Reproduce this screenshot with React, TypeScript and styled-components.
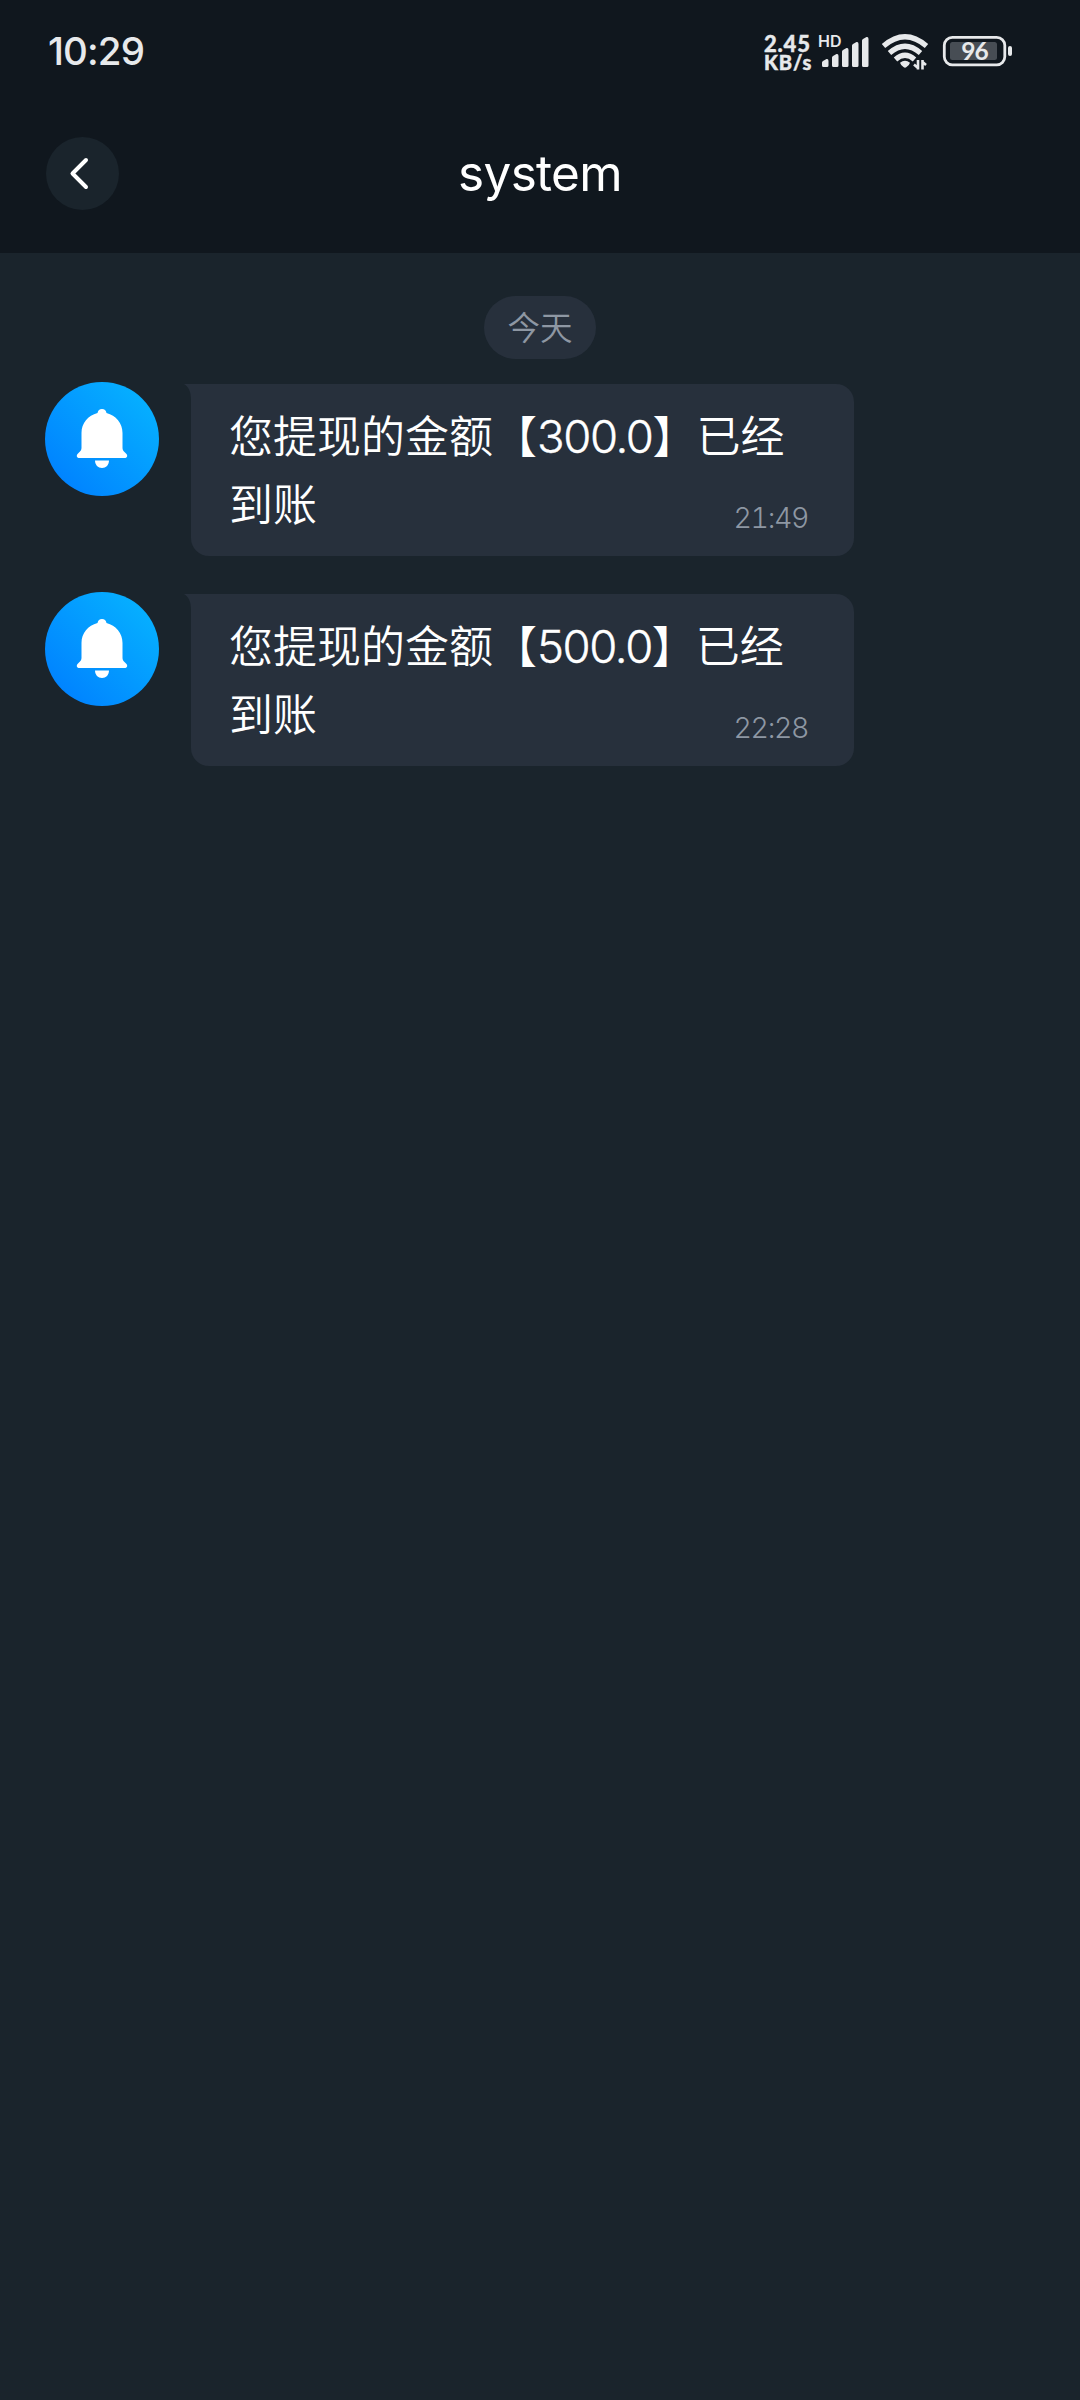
import React from "react";
import styled, { createGlobalStyle } from "styled-components";

const Global = createGlobalStyle`
  * { box-sizing: border-box; }
  body { margin: 0; background: #1a242c; }
`;

const Screen = styled.main`
  width: 1080px;
  min-height: 2400px;
  display: flex;
  flex-direction: column;
  background: #1a242c;
  color: #fff;
  font-family: Inter, "Noto Sans CJK SC", sans-serif;
`;

const Top = styled.header`
  height: 253px;
  background: #10171e;
`;

const StatusBar = styled.div`
  height: 94px;
  padding: 9px 68px 0 48px;
  display: flex;
  justify-content: space-between;
  align-items: center;
  color: #e7e9eb;
`;

const Clock = styled.span`
  margin-bottom: 1px;
  font-size: 38.5px;
  font-weight: 500;
  letter-spacing: -0.9px;
`;

const StatusIcons = styled.div`
  display: flex;
  align-items: center;
`;

const Speed = styled.div`
  width: 57px;
  padding-top: 2px;
  margin-left: -1px;
  margin-right: 1px;
  font-family: Lato, sans-serif;
  font-weight: 900;
  -webkit-text-stroke: 0.4px #e7e9eb;
  white-space: nowrap;
`;

const SpeedLine = styled.div<{ $size: number; $spacing: number }>`
  font-size: ${(p) => p.$size}px;
  line-height: 19px;
  letter-spacing: ${(p) => p.$spacing}px;
`;

const Signal = styled.svg`
  display: block;
`;

const NavBar = styled.nav`
  height: 159px;
  padding: 0 46px;
  display: grid;
  grid-template-columns: 73px 1fr 73px;
  align-items: center;
`;

const BackButton = styled.button`
  width: 73px;
  height: 73px;
  padding: 0;
  border: 0;
  border-radius: 50%;
  background: #1a242c;
  display: flex;
`;

const Title = styled.h1`
  margin: 0;
  text-align: center;
  font-size: 49.5px;
  line-height: 59px;
  font-weight: 400;
  letter-spacing: -0.7px;
`;

const Chat = styled.section`
  padding: 43px 45px;
  display: flex;
  flex-direction: column;
`;

const DayPill = styled.div`
  align-self: center;
  width: 112px;
  height: 63px;
  margin-bottom: 23px;
  padding-bottom: 4px;
  border-radius: 32px;
  display: flex;
  align-items: center;
  justify-content: center;
  background: #27303c;
  color: #8e97a3;
  font-size: 32.5px;
  font-weight: 350;
`;

const Row = styled.article`
  height: 210px;
  display: flex;
  align-items: flex-start;
  gap: 32px;
`;

const Avatar = styled.div`
  width: 114px;
  height: 114px;
  border-radius: 50%;
  background: linear-gradient(45deg, #0080ff 8%, #06b0ff 88%);
  display: flex;
`;

const Bubble = styled.div`
  position: relative;
  width: 663px;
  height: 172px;
  margin-top: 2px;
  padding: 18px 46px 17px 38px;
  border-radius: 0 18px 18px 18px;
  background: #27303c;
  display: flex;
  flex-direction: column;
`;

const Tail = styled.svg`
  position: absolute;
  left: -7px;
  top: 0;
`;

const Line = styled.div`
  display: flex;
  justify-content: space-between;
  height: 69px;
  font-size: 44px;
  line-height: 69px;
  font-weight: 350;
  white-space: nowrap;
`;

const Message = styled.p`
  margin: 0;
`;

const Amount = styled.span`
  font-size: 45.5px;
  font-weight: 300;
  letter-spacing: -1.4px;
  -webkit-text-stroke: 0.4px #fff;
`;

const Time = styled.time`
  align-self: flex-end;
  margin-bottom: 2px;
  font-size: 28.5px;
  line-height: 40px;
  font-weight: 350;
  letter-spacing: -1.4px;
  font-variant-numeric: tabular-nums;
  color: #8e97a3;
`;

const bars = [
  { x: 822, y: 59 },
  { x: 832, y: 54 },
  { x: 842, y: 48 },
  { x: 852, y: 42 },
  { x: 862, y: 37 },
];

const messages = [
  { amount: "300.0", time: "21:49" },
  { amount: "500.0", time: "22:28" },
];

function StatusGlyphs() {
  return (
    <Signal width="190" height="40" viewBox="822 32 190 40" overflow="visible">
      <text x="818" y="47" fontFamily="Inter, sans-serif" fontSize="16" fontWeight="600" fill="#e7e9eb">
        HD
      </text>
      {bars.map((b) => (
        <path
          key={b.x}
          d={`M${b.x} ${b.y + 3.5}Q${b.x} ${b.y + 2.5} ${b.x + 1} ${b.y + 2}L${b.x + 4.5} ${b.y}Q${b.x + 6.5} ${b.y - 0.5} ${b.x + 6.5} ${b.y + 2}V65.5Q${b.x + 6.5} 67 ${b.x + 5} 67H${b.x + 1.5}Q${b.x} 67 ${b.x} 65.5Z`}
          fill="#e7e9eb"
        />
      ))}
      <g fill="none" stroke="#e7e9eb" strokeWidth="5.2">
        <path d="M883.500 46Q905 27.500 926.500 46" />
        <path d="M889.500 53Q905 39.500 920.500 53" />
        <path d="M895.500 59.500Q905 51 914.500 59.500" />
      </g>
      <path d="M900 62.800Q905 58.800 910 62.800Q909.500 65 906.500 67Q905 68.500 903.500 67Q900.500 65 900 62.800Z" fill="#e7e9eb" />
      <path d="M918 60V69.500M918 68L914 64.500M922.500 69.500V60M922 61.500L926 65" stroke="#e7e9eb" strokeWidth="2.600" fill="none" />
      <rect x="944.300" y="37.300" width="60.500" height="27.500" rx="8" fill="none" stroke="#e7e9eb" strokeWidth="2.800" />
      <rect x="950" y="42" width="47" height="18" rx="2.500" fill="#474d54" />
      <rect x="1008" y="46" width="4" height="10" rx="2" fill="#e7e9eb" />
      <text x="974.500" y="60.300" textAnchor="middle" fontFamily="Lato, sans-serif" fontSize="24.500" fontWeight="700" letterSpacing="-1" fill="#e7e9eb">
        96
      </text>
    </Signal>
  );
}

function Bell() {
  return (
    <svg width="114" height="114" viewBox="0 0 114 114" fill="#fff">
      <path d="M57 27C54.500 27 53 28.500 52.500 31C43 33.500 36.500 41 36.500 51V66C36.500 68 35.500 69 34 70.500L32.500 72C31 74 32 76 34.500 76H79.500C82 76 83 74 81.500 72L80 70.500C78.500 69 77.500 68 77.500 66V51C77.500 41 71 33.500 61.500 31C61 28.500 59.500 27 57 27Z" />
      <path d="M50 78.500H64C64 83 61 86 57 86S50 83 50 78.500Z" />
    </svg>
  );
}

export default function App() {
  return (
    <Screen>
      <Global />
      <Top>
        <StatusBar>
          <Clock>10:29</Clock>
          <StatusIcons>
            <Speed>
              <SpeedLine $size={22} $spacing={0.8}>2.45</SpeedLine>
              <SpeedLine $size={20} $spacing={0.9}>KB/s</SpeedLine>
            </Speed>
            <StatusGlyphs />
          </StatusIcons>
        </StatusBar>
        <NavBar>
          <BackButton aria-label="Back">
            <svg width="73" height="73" viewBox="0 0 73 73" fill="none" stroke="#fff" strokeWidth="4" strokeLinecap="round" strokeLinejoin="round">
              <path d="M40 23L26.500 36.500L40 50" />
            </svg>
          </BackButton>
          <Title>system</Title>
        </NavBar>
      </Top>
      <Chat>
        <DayPill>今天</DayPill>
        {messages.map((m) => (
          <Row key={m.time}>
            <Avatar>
              <Bell />
            </Avatar>
            <Bubble>
              <Tail width="8" height="16" viewBox="0 0 8 16">
                <path d="M0 0H8V16H7C7 8 5 3 0 0Z" fill="#27303c" />
              </Tail>
              <Line>
                <Message>
                  您提现的金额【<Amount>{m.amount}</Amount>】已经
                </Message>
              </Line>
              <Line>
                <Message>到账</Message>
                <Time>{m.time}</Time>
              </Line>
            </Bubble>
          </Row>
        ))}
      </Chat>
    </Screen>
  );
}
